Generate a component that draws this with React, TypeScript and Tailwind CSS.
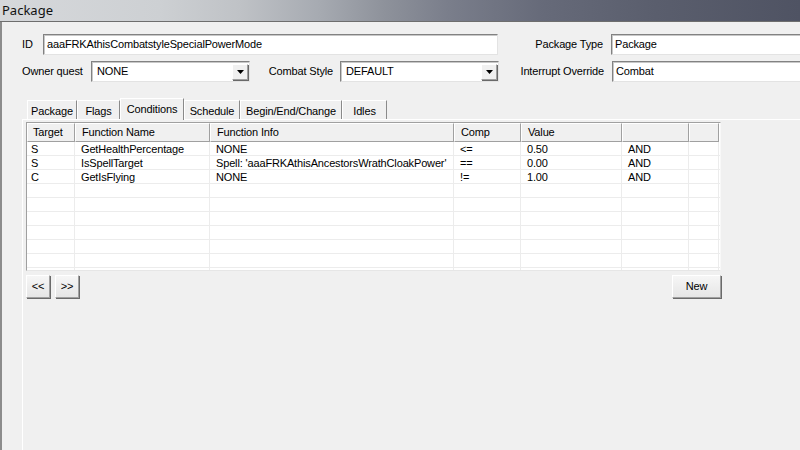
import type { ReactNode } from 'react'

const font = "font-['Liberation_Sans',Arial,sans-serif]"

function Field({ value, className }: { value: string; className: string }) {
    return (
        <div
            className={`shrink-0 h-[21px] bg-white border border-t-[#828282] border-l-[#828282] border-r-[#e3e3e3] border-b-[#e3e3e3] shadow-[inset_1px_1px_0_#c8c8c8] pl-[3px] flex items-center text-black ${className}`}
        >
            {value}
        </div>
    )
}

function Combo({ value }: { value: string }) {
    return (
        <div className="shrink-0 h-[21px] w-[159px] bg-white border border-t-[#828282] border-l-[#828282] border-r-[#e3e3e3] border-b-[#e3e3e3] shadow-[inset_1px_1px_0_#c8c8c8] pl-[5px] pr-px flex items-center justify-between">
            <span>{value}</span>
            <div className="w-[16px] h-[16px] bg-[#f0f0f0] border border-t-white border-l-white border-r-[#a0a0a0] border-b-[#a0a0a0] shadow-[1px_1px_0_#696969] flex items-center justify-center">
                <svg width="7" height="4" viewBox="0 0 7 4">
                    <path d="M0 0h7L3.5 4z" fill="#000" />
                </svg>
            </div>
        </div>
    )
}

function Button({ children, className }: { children: ReactNode; className: string }) {
    return (
        <div
            className={`shrink-0 h-[23px] bg-[linear-gradient(#f6f6f6,#e6e6e6)] border border-t-white border-l-white border-r-[#a0a0a0] border-b-[#a0a0a0] shadow-[1px_1px_0_#6a6a6a] flex items-center justify-center text-black ${className}`}
        >
            {children}
        </div>
    )
}

const tabs = [
    { label: 'Package', w: 'w-[50px]' },
    { label: 'Flags', w: 'w-[43px]' },
    { label: 'Conditions', w: 'w-[64px]', active: true },
    { label: 'Schedule', w: 'w-[56px]' },
    { label: 'Begin/End/Change', w: 'w-[102px]' },
    { label: 'Idles', w: 'w-[45px]' },
]

const headers = ['Target', 'Function Name', 'Function Info', 'Comp', 'Value', '', '']

const rows = [
    ['S', 'GetHealthPercentage', 'NONE', '<=', '0.50', 'AND', ''],
    ['S', 'IsSpellTarget', "Spell: 'aaaFRKAthisAncestorsWrathCloakPower'", '==', '0.00', 'AND', ''],
    ['C', 'GetIsFlying', 'NONE', '!=', '1.00', 'AND', ''],
]

const cols = 'grid grid-cols-[48px_135px_244px_67px_101px_67px_30px_1fr]'

export default function App() {
    const allRows = [...rows, ...Array(7).fill(['', '', '', '', '', '', ''])]

    return (
        <div className={`w-[800px] h-[450px] overflow-hidden bg-[#f0f0f0] text-[11px] tracking-[-0.15px] text-black ${font}`}>
            {/* blurred aero title bar */}
            <div className="h-[22px] border-b border-[#6e6e6e] bg-[linear-gradient(90deg,#d6d8db_0%,#cdd0d3_20%,#bfc2c6_30%,#a6aab1_40%,#8e929b_48%,#7a7e8b_56%,#666a79_68%,#5a5e6d_82%,#4f5363_100%)] flex items-center pl-[2px]">
                <span className="font-['Noto_Sans',sans-serif] text-[13px] tracking-normal text-[#111] leading-none -mt-[1px]">Package</span>
            </div>

            <div className="h-[428px] border-l-2 border-[#8c8c8c] pl-[20px] pt-[12px]">
                {/* ID row */}
                <div className="flex items-center">
                    <div className="shrink-0 w-[21px]">ID</div>
                    <Field value="aaaFRKAthisCombatstyleSpecialPowerMode" className="w-[455px]" />
                    <div className="shrink-0 w-[113px] text-right pr-[8px]">Package Type</div>
                    <Field value="Package" className="w-[200px]" />
                </div>
                {/* second row */}
                <div className="flex items-center mt-[6px]">
                    <div className="shrink-0 w-[69px]">Owner quest</div>
                    <Combo value="NONE" />
                    <div className="shrink-0 w-[90px] text-right pr-[7px]">Combat Style</div>
                    <Combo value="DEFAULT" />
                    <div className="shrink-0 w-[113px] text-right pr-[8px]">Interrupt Override</div>
                    <Field value="Combat" className="w-[200px]" />
                </div>

                {/* tabs */}
                <div className="flex items-end h-[21px] mt-[16px] pl-[5px]">
                    {tabs.map((t) =>
                        t.active ? (
                            <div
                                key={t.label}
                                className={`relative z-10 -mb-px h-[22px] ${t.w} shrink-0 bg-[#f0f0f0] border-l border-t border-r border-l-white border-t-white border-r-[#8a8a8a] text-center pt-[2px]`}
                            >
                                {t.label}
                            </div>
                        ) : (
                            <div
                                key={t.label}
                                className={`h-[19px] ${t.w} shrink-0 border-l border-t border-r border-l-white border-t-white border-r-[#8a8a8a] text-center pt-[2px]`}
                            >
                                {t.label}
                            </div>
                        )
                    )}
                </div>

                {/* tab panel */}
                <div className="border-t border-l border-white h-[400px] pl-[3px] pt-[2px]">
                    <div className="w-[695px] h-[149px] bg-white border border-t-[#a0a0a0] border-l-[#a0a0a0] border-r-[#f8f8f8] border-b-[#e6e6e6] overflow-hidden">
                        <div className={`${cols} h-[19px]`}>
                            {headers.map((h, i) => (
                                <div
                                    key={i}
                                    className={`bg-[#f0f0f0] border-t border-l border-t-white border-l-white border-r border-b border-r-[#a0a0a0] border-b-[#a0a0a0] flex items-center ${i === 0 ? 'pl-[5px]' : 'pl-[6px]'}`}
                                >
                                    {h}
                                </div>
                            ))}
                            <div className="bg-white" />
                        </div>
                        {allRows.map((r, ri) => (
                            <div key={ri} className={`${cols} h-[14px]`}>
                                {r.map((c: string, ci: number) => (
                                    <div
                                        key={ci}
                                        className={`border-r border-b border-[#ececec] flex items-center pt-px leading-none whitespace-nowrap overflow-hidden ${ci === 0 ? 'pl-[4px]' : 'pl-[6px]'}`}
                                    >
                                        {c}
                                    </div>
                                ))}
                                <div className="border-b border-[#ececec]" />
                            </div>
                        ))}
                    </div>

                    <div className="w-[695px] flex justify-between items-start mt-[4px]">
                        <div className="flex gap-[5px]">
                            <Button className="w-[24px]">&lt;&lt;</Button>
                            <Button className="w-[24px]">&gt;&gt;</Button>
                        </div>
                        <Button className="w-[49px]">New</Button>
                    </div>
                </div>
            </div>
        </div>
    )
}
